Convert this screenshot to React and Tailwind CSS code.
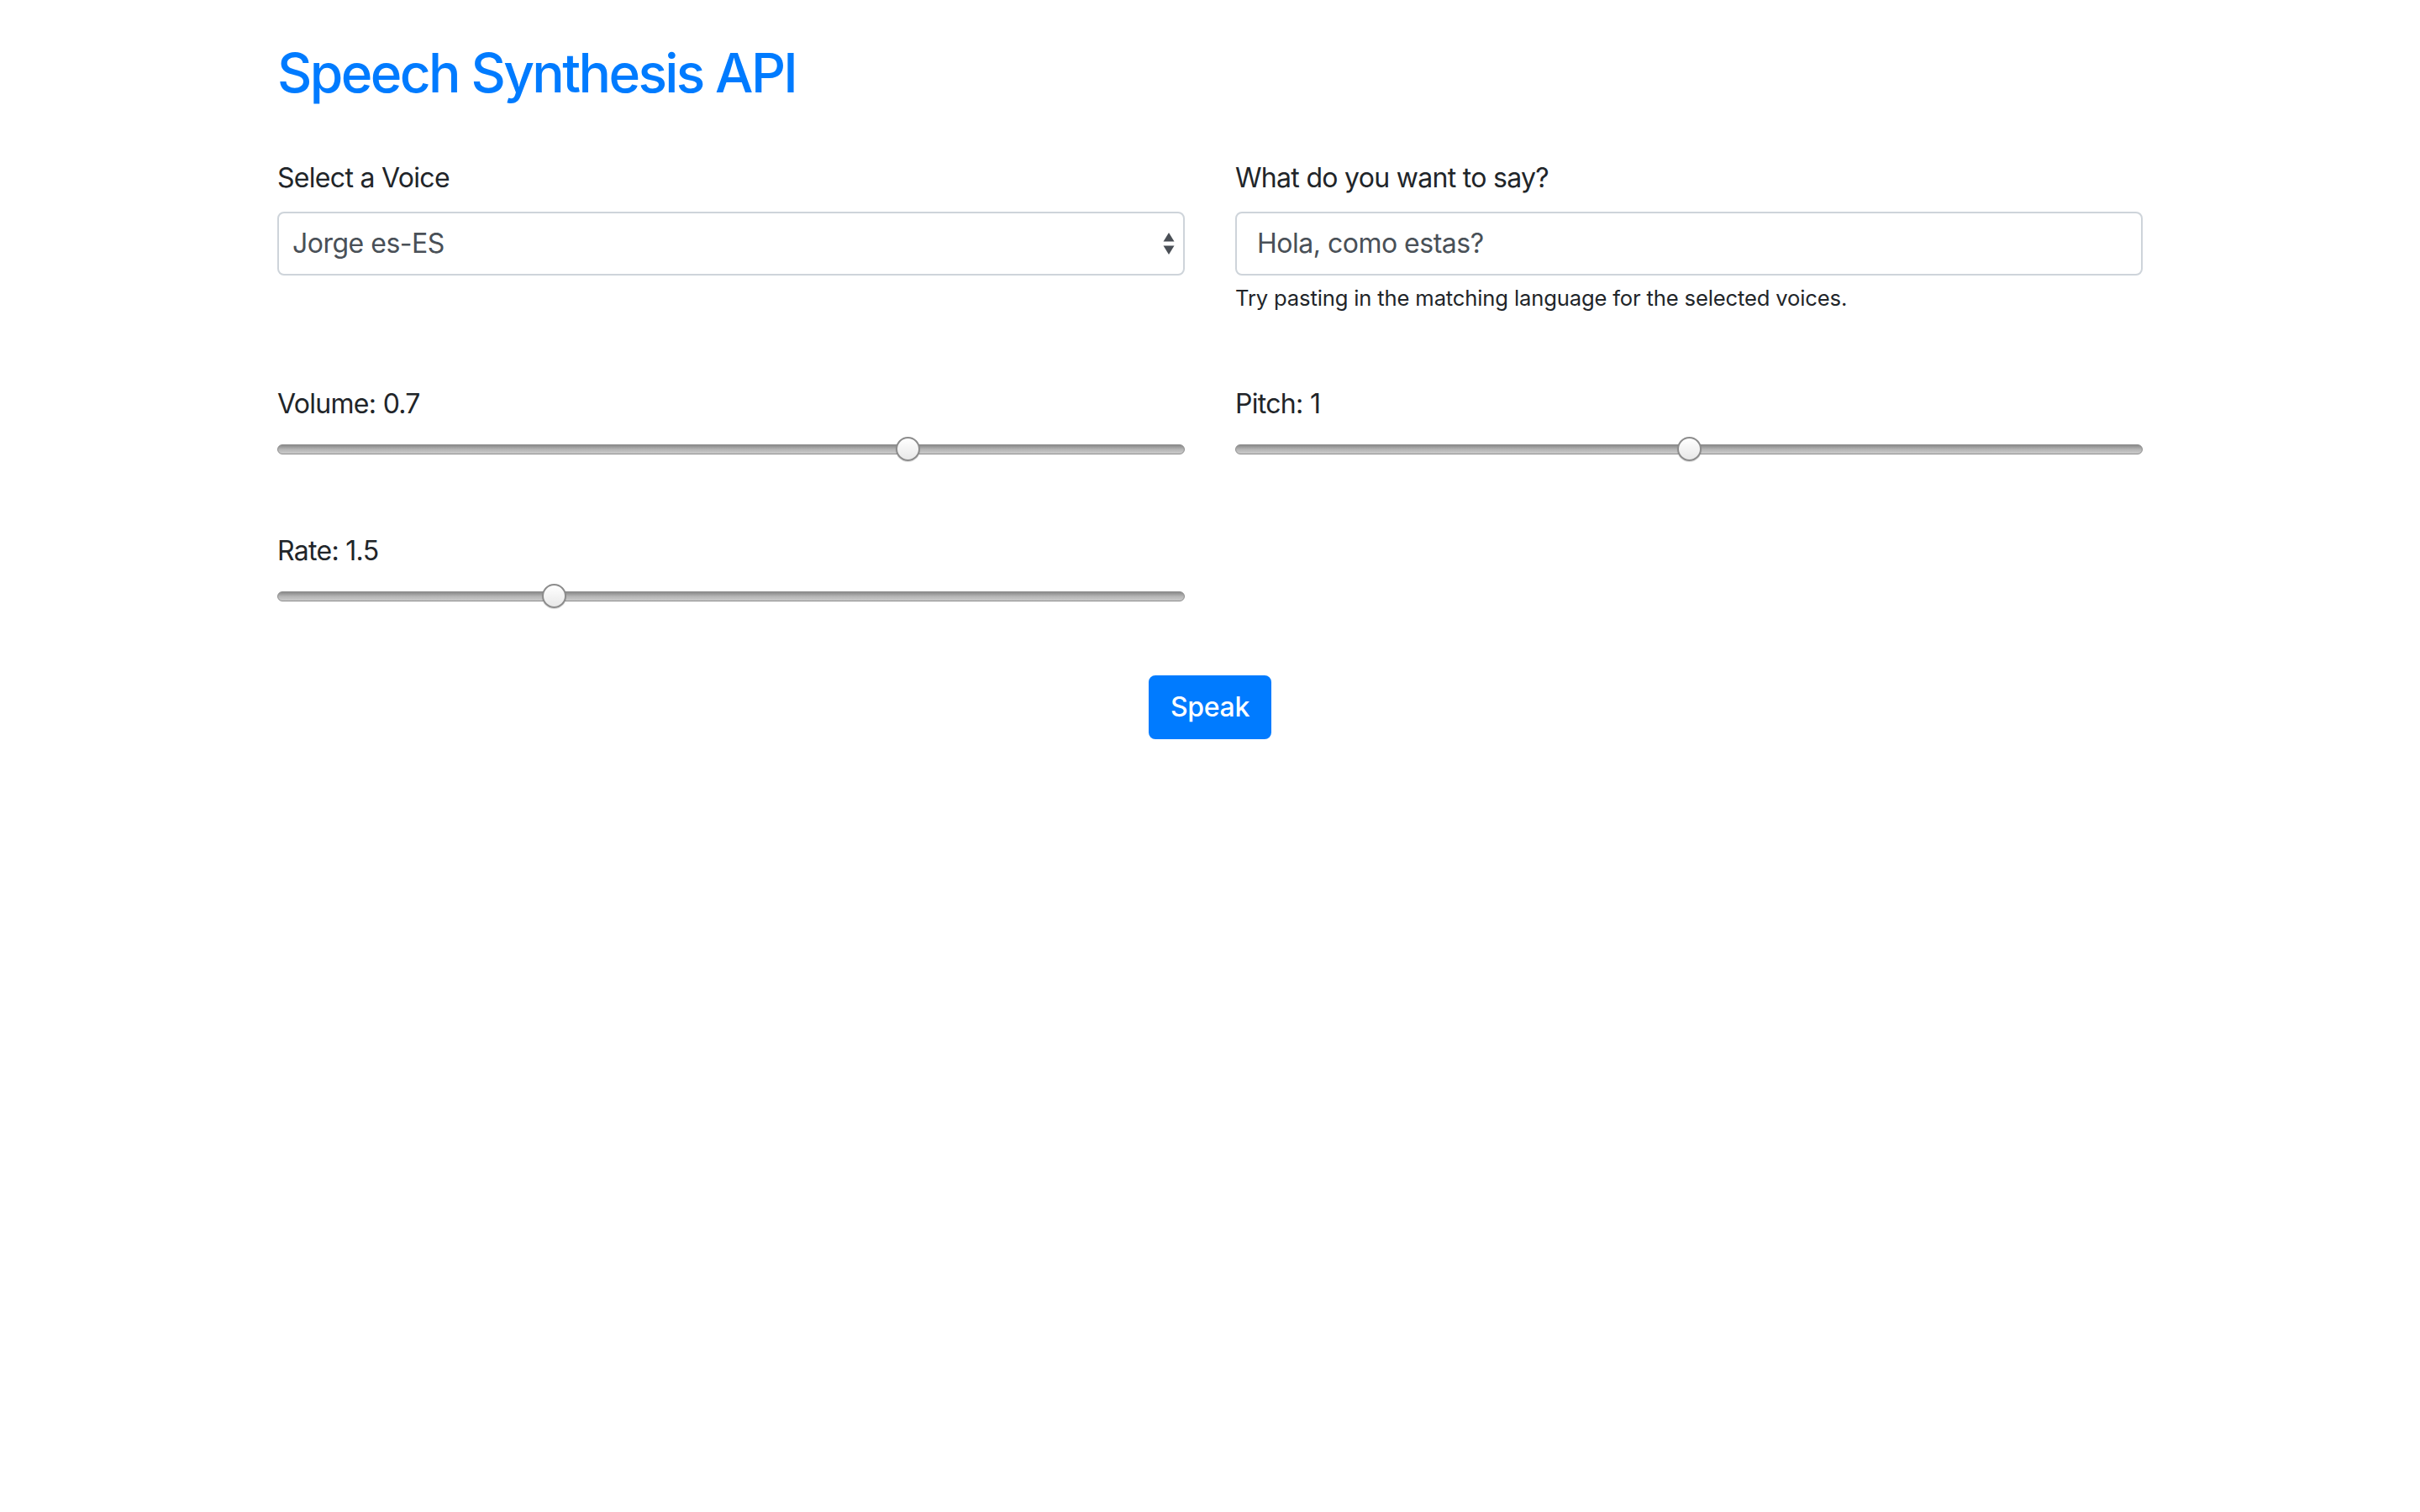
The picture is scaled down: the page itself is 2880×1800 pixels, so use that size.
import { useState } from 'react'

// range slider drawn by hand so it looks like the mac native one
function Slider({ value, min, max }) {
  const frac = (value - min) / (max - min)
  return (
    <div className="relative flex h-[28px] w-full items-center">
      <div className="h-[12px] w-full rounded-full border border-[#8d8d8d] bg-gradient-to-b from-[#8a8a8a] via-[#b5b5b5] to-[#cbcbcb]" />
      <div
        className="absolute top-[-0.5px] h-[29px] w-[29px] rounded-full border-2 border-[#8c8c8c] bg-gradient-to-b from-white to-[#e8e8e8] shadow-[0_1px_1px_rgba(0,0,0,0.15)]"
        style={{ left: `calc(${frac} * (100% - 29px))` }}
      />
    </div>
  )
}

function App() {
  const [voice] = useState('Jorge es-ES')
  const [text] = useState('Hola, como estas?')
  const [volume] = useState(0.7)
  const [pitch] = useState(1)
  const [rate] = useState(1.5)

  return (
    <div className="min-h-screen bg-white font-['Inter','Noto_Sans',sans-serif] text-[#212529]">
      <div className="mx-auto w-[2220px] pt-[49px]">
        <h2 className="mb-[62px] text-[64px] font-medium leading-[1.2] tracking-[-2.6px] text-[#007bff]">Speech Synthesis API</h2>

        {/* Voice + text */}
        <div className="grid grid-cols-2 gap-x-[60px]">
          <div>
            <label className="mb-[16px] block text-[32px] leading-[48px] tracking-[-0.7px]">Select a Voice</label>
            <div className="flex h-[76px] items-center justify-between rounded-[8px] border-2 border-[#ced4da] pl-[16px] pr-[9px] text-[32px] tracking-[-0.5px] text-[#495057]">
              <span>{voice}</span>
              <svg width="16" height="28" viewBox="0 0 16 28" className="text-[#4a4f56]">
                <path d="M8 1 L14.5 11.5 L1.5 11.5 Z" fill="currentColor" />
                <path d="M1.5 16.5 L14.5 16.5 L8 27 Z" fill="currentColor" />
              </svg>
            </div>
          </div>
          <div>
            <label className="mb-[16px] block text-[32px] leading-[48px] tracking-[-0.7px]">What do you want to say?</label>
            <div className="flex h-[76px] items-center rounded-[8px] border-2 border-[#ced4da] px-[24px] text-[32px] tracking-[-0.5px] text-[#495057]">
              {text}
            </div>
            <p className="mt-[8px] text-[25.6px] leading-[38px] tracking-[-0.15px]">Try pasting in the matching language for the selected voices.</p>
          </div>
        </div>

        {/* Sliders */}
        <div className="mt-[83px] grid grid-cols-2 gap-x-[60px] gap-y-[83px]">
          <div>
            <label className="mb-[16px] block text-[32px] leading-[48px] tracking-[-0.7px]">Volume: {volume}</label>
            <Slider value={volume} min={0} max={1} />
          </div>
          <div>
            <label className="mb-[16px] block text-[32px] leading-[48px] tracking-[-0.7px]">Pitch: {pitch}</label>
            <Slider value={pitch} min={0} max={2} />
          </div>
          <div>
            <label className="mb-[16px] block text-[32px] leading-[48px] tracking-[-0.7px]">Rate: {rate}</label>
            <Slider value={rate} min={0} max={5} />
          </div>
        </div>

        <div className="mt-[80px] text-center">
          <button className="h-[76px] rounded-[8px] border-2 border-[#007bff] bg-[#007bff] px-[24px] text-[32px] font-medium tracking-[-0.3px] text-white">
            Speak
          </button>
        </div>
      </div>
    </div>
  )
}

export default App
